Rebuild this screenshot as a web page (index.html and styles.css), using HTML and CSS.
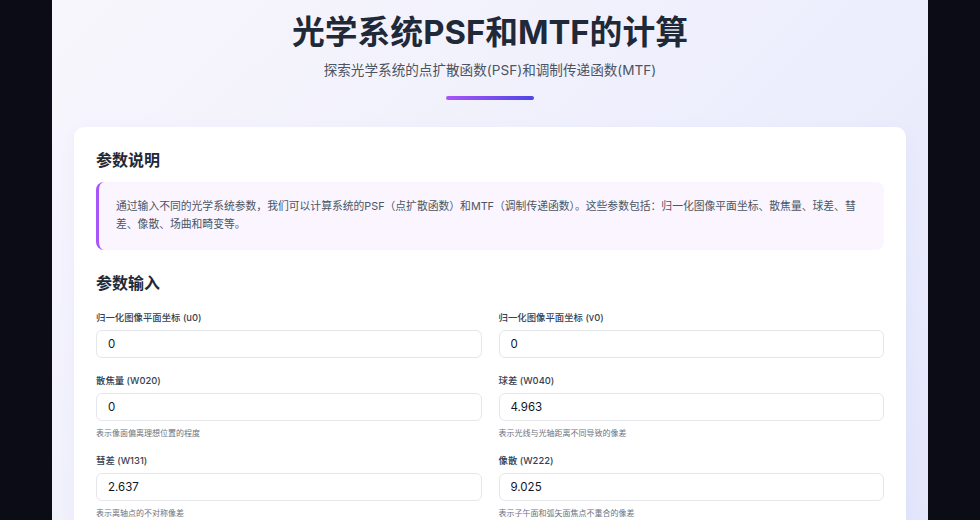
FILE: index.html
```html
<!DOCTYPE html>
<html lang="zh-CN">
<head>
    <meta charset="utf-8">
    <title>光学系统PSF和MTF的计算</title>
    <link rel="stylesheet" href="styles.css">
</head>
<body>

<main class="page">

<header class="hero">
    <h1 class="title">光学系统PSF和MTF的计算</h1>
    <p class="subtitle">探索光学系统的点扩散函数(PSF)和调制传递函数(MTF)</p>
    <div class="bar"></div>
</header>

<section class="card">
    <h2>参数说明</h2>
    <div class="info">
        通过输入不同的光学系统参数，我们可以计算系统的PSF（点扩散函数）和MTF（调制传递函数）。这些参数包括：归一化图像平面坐标、散焦量、球差、彗差、像散、场曲和畸变等。
    </div>

    <h2 class="gap">参数输入</h2>
    <div class="grid">
        <div class="field">
            <label>归一化图像平面坐标 (u0)</label>
            <input type="text" value="0">
        </div>
        <div class="field">
            <label>归一化图像平面坐标 (v0)</label>
            <input type="text" value="0">
        </div>
        <div class="field">
            <label>散焦量 (W020)</label>
            <input type="text" value="0">
            <p class="hint">表示像面偏离理想位置的程度</p>
        </div>
        <div class="field">
            <label>球差 (W040)</label>
            <input type="text" value="4.963">
            <p class="hint">表示光线与光轴距离不同导致的像差</p>
        </div>
        <div class="field">
            <label>彗差 (W131)</label>
            <input type="text" value="2.637">
            <p class="hint">表示离轴点的不对称像差</p>
        </div>
        <div class="field">
            <label>像散 (W222)</label>
            <input type="text" value="9.025">
            <p class="hint">表示子午面和弧矢面焦点不重合的像差</p>
        </div>
    </div>
</section>

</main>

</body>
</html>
```

FILE: styles.css
```css
html, body {
    margin: 0;
    padding: 0;
}

body {
    background-color: #0b0c16;
    font-family: Inter, "Noto Sans CJK SC", sans-serif;
    color: #1f2937;
    height: 520px;
    overflow: hidden;
}

.page {
    width: 876px;
    margin: 0 auto;
    min-height: 520px;
    padding: 0 22px;
    box-sizing: border-box;
    background: linear-gradient(135deg, #f8f6fc 0%, #eeeffd 55%, #e3e6fb 100%);
}

.hero {
    text-align: center;
    padding-top: 12px;
}

.title {
    font-size: 32.8px;
    line-height: 40px;
    font-weight: 700;
    margin: 0;
    color: #1f2937;
}

.subtitle {
    font-size: 13.6px;
    line-height: 20px;
    color: #4b5563;
    margin: 8px 0 0 0;
}

.bar {
    width: 88px;
    height: 4px;
    margin: 16px auto 0 auto;
    border-radius: 2px;
    background: linear-gradient(90deg, #a855f7, #4f46e5);
}

.card {
    margin-top: 27px;
    background-color: white;
    border-radius: 10px;
    padding: 21px 22px 12px 22px;
    box-shadow: 0 4px 16px rgba(99, 102, 241, 0.06);
}

h2 {
    font-size: 16px;
    line-height: 24px;
    font-weight: 700;
    margin: 0;
    color: #1f2937;
}

h2.gap {
    margin-top: 21px;
}

.info {
    margin-top: 10px;
    background-color: #faf5ff;
    border-left: 3px solid #a855f7;
    border-radius: 8px;
    padding: 16px 12px 16px 17px;
    font-size: 10.8px;
    line-height: 18px;
    color: #4b5563;
}

.grid {
    margin-top: 16px;
    display: grid;
    grid-template-columns: 1fr 1fr;
    column-gap: 17px;
    row-gap: 16px;
}

.field label {
    display: block;
    font-size: 9.4px;
    line-height: 14px;
    font-weight: 500;
    color: #374151;
}

.field input {
    display: block;
    width: 100%;
    box-sizing: border-box;
    height: 28px;
    margin-top: 5px;
    padding: 0 11px;
    border: 1px solid #e5e7eb;
    border-radius: 6px;
    font-family: Inter, "Noto Sans CJK SC", sans-serif;
    font-size: 11.5px;
    color: #111827;
    background-color: white;
}

.hint {
    margin: 6px 0 -1px 0;
    font-size: 8px;
    line-height: 12px;
    color: #6b7280;
}
```
